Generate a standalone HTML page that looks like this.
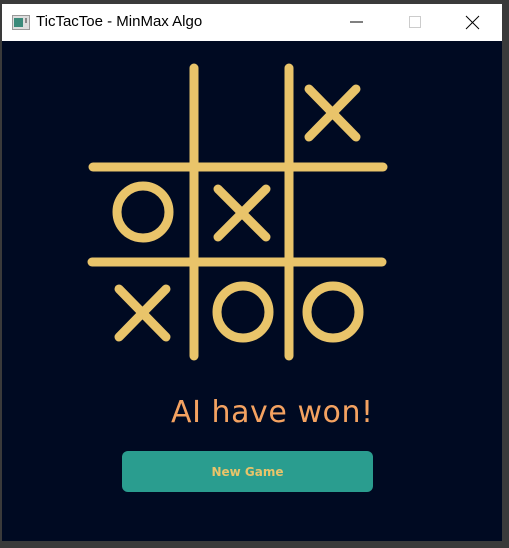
<!DOCTYPE html>
<html><head><style>
html,body{margin:0;padding:0;width:509px;height:548px;overflow:hidden;background:#3a3a3a;}
.win{position:absolute;left:2px;top:4px;width:500px;height:537px;background:#000a22;}
.tb{position:absolute;left:0;top:0;width:500px;height:37px;background:#fff;font-family:"Liberation Sans",sans-serif;font-size:15px;color:#000;}
.tb .t{position:absolute;left:34px;top:9px;}
.msg{position:absolute;left:171px;top:395px;font-family:"DejaVu Sans",sans-serif;font-size:30px;letter-spacing:0.55px;color:#f4a261;}
.btn{position:absolute;left:122px;top:451px;width:251px;height:41px;background:#2a9d8f;border-radius:6px;color:#e9c46a;font-family:"DejaVu Sans",sans-serif;font-weight:bold;font-size:12px;text-align:center;line-height:43px;}
</style></head><body>
<div class="win">
<div class="tb">
<svg style="position:absolute;left:10px;top:11px" width="18" height="15"><rect x="0.5" y="0.5" width="17" height="14" fill="#ddd" stroke="#999"/><rect x="2" y="3" width="9" height="9" fill="#3a8a7a"/><rect x="13" y="3" width="2" height="5" fill="#888"/></svg>
<span class="t">TicTacToe - MinMax Algo</span>
<svg style="position:absolute;left:340px;top:10px" width="160" height="18"><line x1="8" y1="8" x2="21" y2="8" stroke="#000" stroke-width="1"/><rect x="67.5" y="2.5" width="11" height="11" fill="none" stroke="#ccc"/><line x1="124" y1="2" x2="137" y2="15" stroke="#000"/><line x1="137" y1="2" x2="124" y2="15" stroke="#000"/></svg>
</div>
</div>
<svg style="position:absolute;left:0;top:0" width="509" height="548">
<g stroke="#e9c46a" stroke-width="9" stroke-linecap="round" fill="none">
<line x1="194" y1="68" x2="194" y2="356"/>
<line x1="289" y1="68" x2="289" y2="356"/>
<line x1="93" y1="167" x2="383" y2="167"/>
<line x1="92" y1="262" x2="382" y2="262"/>
<line x1="309" y1="89" x2="356" y2="137"/><line x1="356" y1="89" x2="309" y2="137"/>
<line x1="218" y1="189" x2="266" y2="237"/><line x1="266" y1="189" x2="218" y2="237"/>
<line x1="119" y1="289" x2="166" y2="337"/><line x1="166" y1="289" x2="119" y2="337"/>
<circle cx="143" cy="212" r="26"/>
<circle cx="243" cy="312" r="26"/>
<circle cx="333" cy="312" r="26"/>
</g></svg>
<div class="msg">AI have won!</div>
<div class="btn">New Game</div>
</body></html>
